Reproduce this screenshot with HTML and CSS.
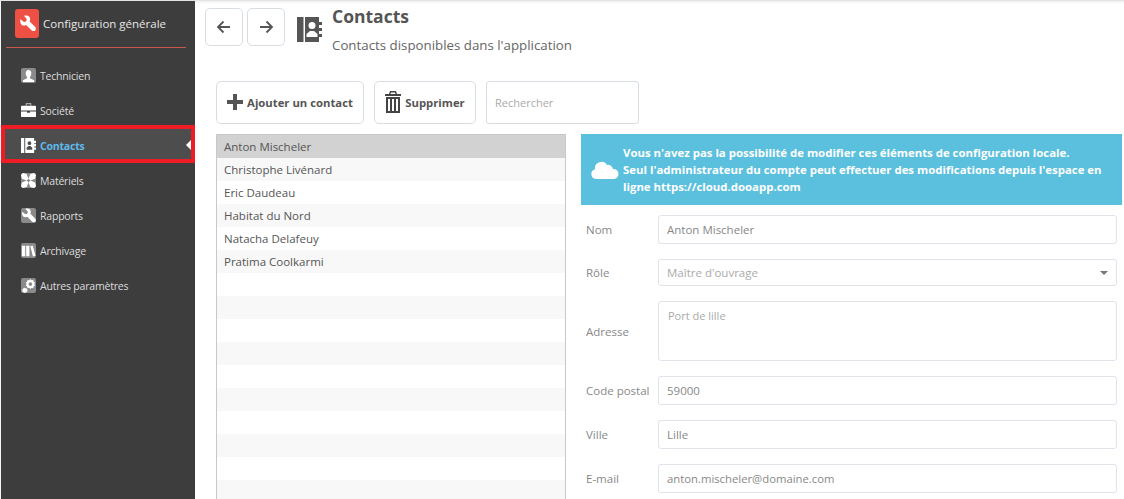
FILE: index.html
```html
<!DOCTYPE html>
<html lang="fr">
<head>
<meta charset="utf-8">
<title>Contacts</title>
<link rel="stylesheet" href="styles.css">
</head>
<body>
<div class="app">
  <aside class="sidebar">
    <div class="brand">
      <span class="brand-icon"><svg viewBox="0 0 24 24"><path fill="#fff" d="M2 6l5 4 3-1 1-3-4-5c4-1 7 0 8 2 1 2 1 4 0 6l8 8c1 1 1 4 0 5s-4 1-5 0l-8-8c-2 1-4 1-6 0C2 12 1 9 2 6z"/></svg></span>
      <span class="brand-text">Configuration générale</span>
    </div>
    <nav class="menu">
      <a class="item"><span class="ico"><svg viewBox="0 0 16 16"><path fill="#fff" d="M8 2c2 0 3 1.500 3 3.500S10 9 9.500 9.800v1L14 13v2H2v-2l4.500-2.200v-1C6 9 5 7.500 5 5.500S6 2 8 2z"/></svg></span>Technicien</a>
      <a class="item"><span class="ico bare"><svg viewBox="0 0 16 16"><path fill="#a8a8a8" d="M5 0h6v3h-1.200V1.200H6.200V3H5z"/><path fill="#fff" d="M0 4q0-1 1-1h14q1 0 1 1v4H0zM0 9h6.500v1.500h3V9H16v5q0 1-1 1H1q-1 0-1-1z"/></svg></span>Société</a>
      <a class="item active"><span class="ico bare"><svg viewBox="0 0 16 16"><path fill="#fff" fill-rule="evenodd" d="M0 0h3.500v16H0zM4.500 0H14v3h2v2.500h-2v1h2V9h-2v1h2v2.500h-2V16H4.500zM9 3.500a2 2 0 1 0 0 4 2 2 0 1 0 0-4zM6 12.500h6v-2L10 8.500H8l-2 2z"/></svg></span>Contacts</a>
      <a class="item"><span class="ico"><svg viewBox="0 0 16 16"><path fill="#fff" d="M0 2l2-2 4 1 2 5-2 2-5-2zM16 2l-2-2-4 1-2 5 2 2 5-2zM0 14l2 2 4-1 2-5-2-2-5 2zM16 14l-2 2-4-1-2-5 2-2 5 2z"/></svg></span>Matériels</a>
      <a class="item"><span class="ico"><svg viewBox="0 0 24 24"><path fill="#fff" d="M2 6l5 4 3-1 1-3-4-5c4-1 7 0 8 2 1 2 1 4 0 6l8 8c1 1 1 4 0 5s-4 1-5 0l-8-8c-2 1-4 1-6 0C2 12 1 9 2 6z"/></svg></span>Rapports</a>
      <a class="item"><span class="ico"><svg viewBox="0 0 16 16"><path fill="#fff" d="M1 3h3.500v11H1zM5.500 3H9v11H5.500zM10 3.500l2.500-.8L15.500 13.500l-2.800.8z"/></svg></span>Archivage</a>
      <a class="item"><span class="ico"><svg viewBox="0 0 16 16"><path fill="#fff" fill-rule="evenodd" d="M10 1l1 1.500 2-.5.500 2 1.500 1-1 1.500 1 1.500-1.500 1-.5 2-2-.5-1 1.500-1-1.500-2 .5-.5-2L5 8l1-1.500L5 5l1.500-1 .5-2 2 .5zM10 4.500a2 2 0 1 0 0 4 2 2 0 1 0 0-4zM4 10l.7 1 1.300-.2.200 1.300 1 .7-.7 1 .2 1.200-1.200.2L4 16l-1.300-.8-1.200-.2.200-1.200-.7-1 1-.7.2-1.300 1.300.2z"/></svg></span>Autres paramètres</a>
    </nav>
  </aside>
  <main class="main">
    <header class="head">
      <div class="nav-buttons">
        <button class="sq"><svg viewBox="0 0 16 16" width="16" height="16"><path fill="none" stroke="#555" stroke-width="1.800" d="M14 8H2M7.500 2.500L2 8l5.500 5.500"/></svg></button>
        <button class="sq"><svg viewBox="0 0 16 16" width="16" height="16"><path fill="none" stroke="#555" stroke-width="1.800" d="M2 8h12M8.500 2.500L14 8l-5.500 5.500"/></svg></button>
      </div>
      <svg class="head-ico" viewBox="0 0 25 25" width="25" height="25"><path fill="#555" fill-rule="evenodd" d="M0 0h6.500v25H0zM8 0h14v5h3v3h-3v3h3v3h-3v3h3v3h-3v5H8zM15 5a3.500 3.500 0 1 0 0 7 3.500 3.500 0 1 0 0-7zM9.500 20h11v-3l-3.500-3h-4l-3.500 3z"/></svg>
      <div class="titles">
        <h1>Contacts</h1>
        <p>Contacts disponibles dans l'application</p>
      </div>
    </header>
    <div class="toolbar">
      <button class="btn add"><svg viewBox="0 0 16 16" width="16" height="16"><path fill="#555" d="M6 0h4v6h6v4h-6v6H6v-6H0V6h6z"/></svg>Ajouter un contact</button>
      <button class="btn del"><svg viewBox="0 0 16 22" width="16" height="22"><path fill="#444" fill-rule="evenodd" d="M5 0h6l1 3h4v2H0V3h4zM6 1.500L5.500 3h5L10 1.500zM1 6h14v16H1zM3 8v12h2V8zM7 8v12h2V8zM11 8v12h2V8z"/></svg>Supprimer</button>
      <div class="search">Rechercher</div>
    </div>
    <div class="content">
      <ul class="list">
        <li class="sel">Anton Mischeler</li>
        <li>Christophe Livénard</li>
        <li>Eric Daudeau</li>
        <li>Habitat du Nord</li>
        <li>Natacha Delafeuy</li>
        <li>Pratima Coolkarmi</li>
        <li></li><li></li><li></li><li></li><li></li><li></li><li></li><li></li><li></li><li></li>
      </ul>
      <section class="detail">
        <div class="notice">
          <svg viewBox="0 0 28 18" width="28" height="18"><path fill="#fff" d="M5 18a5 5 0 0 1-1-9.800A6.500 6.500 0 0 1 16 4a5 5 0 0 1 6 4 5 5 0 0 1 1 10z"/></svg>
          <p>Vous n'avez pas la possibilité de modifier ces éléments de configuration locale.<br>Seul l'administrateur du compte peut effectuer des modifications depuis l'espace en ligne https://cloud.dooapp.com</p>
        </div>
        <div class="form">
          <div class="row"><label>Nom</label><div class="field">Anton Mischeler</div></div>
          <div class="row"><label>Rôle</label><div class="field select pale">Maître d'ouvrage<span class="caret"></span></div></div>
          <div class="row"><label>Adresse</label><div class="field area pale">Port de lille</div></div>
          <div class="row"><label>Code postal</label><div class="field">59000</div></div>
          <div class="row"><label>Ville</label><div class="field">Lille</div></div>
          <div class="row"><label>E-mail</label><div class="field email">anton.mischeler@domaine.com</div></div>
        </div>
      </section>
    </div>
  </main>
</div>
</body>
</html>
```
FILE: styles.css
```css
* { box-sizing: border-box; }
html, body { margin: 0; height: 100%; overflow: hidden; }
body { font-family: "Open Sans", sans-serif; font-size: 12px; color: #555; background: #fff; }
.app { display: flex; height: 499px; border-top: 1px solid #e4e4e4; overflow: hidden; }
.sidebar { width: 195px; flex: none; background: #3d3d3d; border-left: 1px solid #f5f5f5; }
.brand { display: flex; align-items: center; gap: 4px; margin: 0 9px 0 5px; height: 47px; padding: 0 0 2px 9px; border-bottom: 1px solid #c8584d; }
.brand-icon { width: 24px; height: 29px; background: #ef5044; border-radius: 3px; display: flex; align-items: center; justify-content: center; }
.brand-icon svg { width: 17px; height: 17px; }
.brand-text { color: #e6e6e6; font-size: 11.500px; }
.menu { display: flex; flex-direction: column; padding-top: 10px; }
.item { display: flex; align-items: center; height: 35px; padding-left: 20px; gap: 4px; color: #dcdcdc; font-size: 10.500px; letter-spacing: -0.2px; position: relative; }
.ico { width: 15px; height: 15px; background: #8a8a8a; border-radius: 2px; display: flex; flex: none; }
.ico svg { width: 15px; height: 15px; }
.ico.bare { background: transparent; }
.item.active { color: #5fb8ec; font-weight: 700; z-index: 0; }
.item.active::before { content: ""; position: absolute; left: 0; right: 0; top: -3px; bottom: 0; background: #4d4d4d; border: 4px solid #ee1c25; z-index: -1; }
.item.active::after { content: ""; position: absolute; right: 4px; top: 12px; border-style: solid; border-width: 5px 5px 5px 0; border-color: transparent #fff transparent transparent; }
.main { flex: 1; min-width: 0; padding-right: 2px; background: linear-gradient(#f0f0f0, #fff 3px) no-repeat; }
.head { display: flex; align-items: flex-start; height: 80px; padding: 7px 0 0 10px; }
.nav-buttons { display: flex; gap: 4px; }
.sq { width: 38px; height: 38px; padding: 0; background: #fff; border: 1px solid #d8dde4; border-radius: 5px; display: flex; align-items: center; justify-content: center; }
.head-ico { margin: 9px 0 0 12px; }
.titles { margin-left: 10px; margin-top: -1px; }
h1 { margin: 0; font-size: 17.500px; line-height: 18px; font-weight: 700; color: #555; }
.titles p { margin: 11px 0 0; font-size: 13.300px; line-height: 18px; color: #666; }
.toolbar { display: flex; gap: 10px; padding-left: 21px; height: 43px; }
.btn { height: 43px; background: #fff; border: 1px solid #d8dde4; border-radius: 5px; font: 700 11.300px "Open Sans", sans-serif; color: #555; display: flex; align-items: center; justify-content: center; gap: 4px; padding: 0 0 1px; }
.add { width: 148px; }
.del { width: 102px; }
.search { width: 153px; height: 43px; border: 1px solid #d8dde4; border-radius: 3px; color: #aaa; font-size: 11px; display: flex; align-items: center; padding-left: 8px; }
.content { display: flex; gap: 15px; padding-left: 21px; margin-top: 10px; }
.list { width: 350px; height: 365px; margin: 0; padding: 0; list-style: none; border: 1px solid #c8c8c8; border-bottom: 0; overflow: hidden; flex: none; }
.list li { height: 23px; line-height: 24px; padding-left: 7px; color: #555; font-size: 11.500px; }
.list li:nth-child(even) { background: #f8f8f8; }
.list li.sel { background: #d2d2d2; line-height: 23px; }
.detail { flex: 1; min-width: 0; }
.notice { height: 71px; background: #5bc0de; color: #fff; display: flex; align-items: center; padding-left: 10px; gap: 4px; }
.notice svg { flex: none; margin-top: 1px; }
.notice p { margin: 0; font-weight: 700; font-size: 11.400px; line-height: 17px; width: 480px; }
.form { padding-top: 10px; display: flex; flex-direction: column; gap: 15px; }
.row { display: flex; align-items: center; }
.row label { width: 77px; padding-left: 5px; color: #888; font-size: 11.500px; flex: none; }
.field { width: 459px; height: 29px; border: 1px solid #e0e3ea; border-radius: 3px; padding-left: 8px; color: #888; font-size: 11.500px; display: flex; align-items: center; position: relative; }
.email { font-size: 11.300px; }
.pale { color: #aaa; }
.select { height: 27px; }
.area { height: 60px; align-items: flex-start; padding: 6px 9px; font-size: 11px; }
.caret { position: absolute; right: 8px; top: 11px; border-style: solid; border-width: 4px 4px 0; border-color: #777 transparent transparent; }
```
